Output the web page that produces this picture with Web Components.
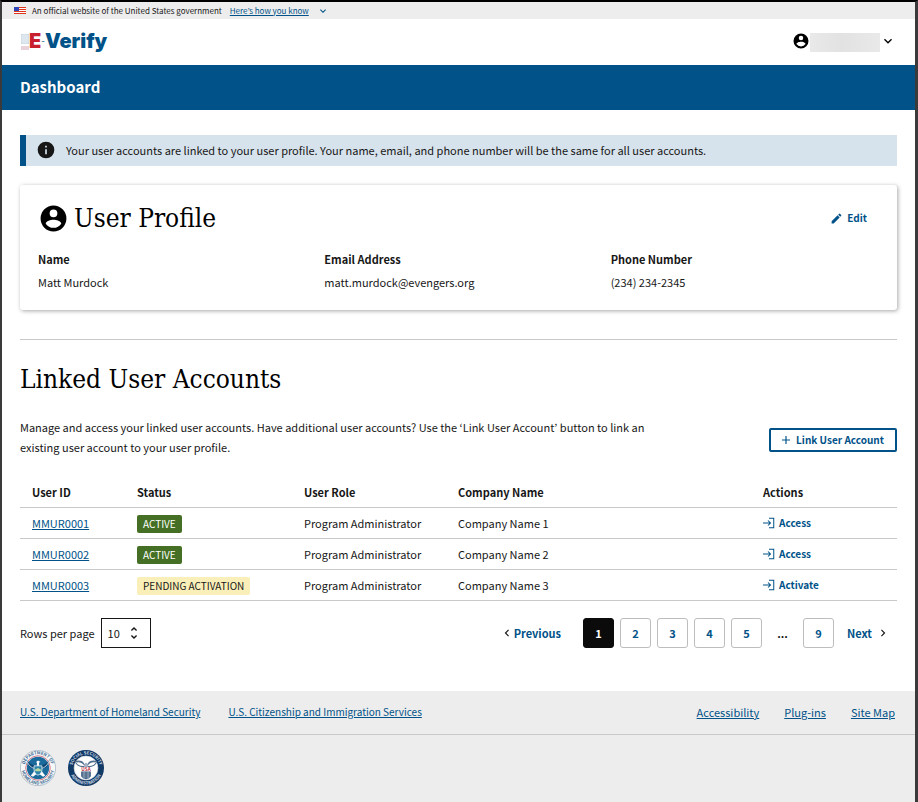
<!DOCTYPE html>
<html lang="en">
<head>
<meta charset="utf-8">
<meta name="viewport" content="width=device-width, initial-scale=1">
<title>E-Verify Dashboard</title>
<style>
  html, body { margin: 0; min-height: 100%; }
  body {
    --blue: #005288;
    --ink: #171717;
    --line: #c9c9c9;
    --grey: #ededed;
    --serif: "DejaVu Serif Condensed", "DejaVu Serif", serif;
    color: var(--ink);
    font: 11px/20px "Noto Sans CJK KR", "Noto Sans", sans-serif;
  }
</style>
</head>
<body>
<everify-app></everify-app>

<script>
const ICONS = {
  person: '<path d="M12 2a10 10 0 1 0 0 20 10 10 0 0 0 0-20zm0 3a3 3 0 1 1 0 6 3 3 0 0 1 0-6zm0 14.200a7.200 7.200 0 0 1-6-3.220c.03-1.990 4-3.080 6-3.080 1.990 0 5.970 1.090 6 3.080a7.200 7.200 0 0 1-6 3.220z"/>',
  info: '<path d="M12 2a10 10 0 1 0 0 20 10 10 0 0 0 0-20zm1 15h-2v-6h2zm0-8h-2V7h2z"/>',
  edit: '<path d="M3 17.250V21h3.750L17.810 9.940l-3.750-3.750zM20.710 7.040a1 1 0 0 0 0-1.410l-2.340-2.340a1 1 0 0 0-1.410 0l-1.830 1.830 3.750 3.750z"/>',
  down: '<path d="M7.410 8.590 12 13.170l4.590-4.580L18 10l-6 6-6-6z"/>',
  prev: '<path d="M15.410 7.410 14 6l-6 6 6 6 1.410-1.410L10.830 12z"/>',
  next: '<path d="M10 6 8.590 7.410 13.170 12l-4.580 4.590L10 18l6-6z"/>',
  unfold: '<path d="M12 5.830 15.170 9l1.410-1.410L12 3 7.410 7.590 8.830 9zm0 12.340L8.830 15l-1.410 1.410L12 21l4.590-4.590L15.170 15z"/>',
  plus: '<path d="M19 13h-6v6h-2v-6H5v-2h6V5h2v6h6z"/>',
  login: '<path d="M12 1.500h10.500v21H12v-2h8.500v-17H12zM0 11h12.600L9.300 7.700l1.400-1.400 5.700 5.700-5.700 5.700-1.400-1.400 3.300-3.300H0z"/>'
};

/**
 * Base class: puts the static template of the element in an open shadow root
 *
 * @extends HTMLElement
 */
class EvElement extends HTMLElement {
  constructor() {
    super();
    this.attachShadow({mode: 'open'}).innerHTML = `
      <style>
        *, :host { box-sizing: border-box; }
        a { color: var(--blue); text-underline-offset: 1px; }
        button { font: inherit; background: none; border: 0; padding: 0; margin: 0; cursor: pointer; }
      </style>
      ${this.template()}
    `;
  }

  template() {
    return '<slot></slot>';
  }
}

// <ev-icon name="edit" size="14">
class EvIcon extends EvElement {
  template() {
    const size = this.getAttribute('size') || 16;
    return `
      <style>
        :host { display: inline-flex; flex: none; }
        svg { display: block; fill: currentColor; }
      </style>
      <svg viewBox="0 0 24 24" width="${size}" height="${size}" aria-hidden="true">${ICONS[this.getAttribute('name')] || ''}</svg>
    `;
  }
}

class GovBanner extends EvElement {
  template() {
    return `
      <style>
        :host { display: flex; align-items: center; height: 17px; padding: 0 12px; background: var(--grey); font-size: 8px; line-height: 16px; }
        svg.flag { margin-right: 6px; }
        a { margin: 0 8px; }
        ev-icon { color: var(--blue); }
      </style>
      <svg class="flag" width="12" height="7" viewBox="0 0 12 7" role="img" aria-label="U.S. flag" shape-rendering="crispEdges">
        <rect width="12" height="7" fill="#fff"/>
        <rect width="12" height="1" fill="#e0341c"/>
        <rect y="2" width="12" height="1" fill="#e0341c"/>
        <rect y="4" width="12" height="1" fill="#e0341c"/>
        <rect y="6" width="12" height="1" fill="#e0341c"/>
        <rect width="5" height="4" fill="#2f47b8"/>
      </svg>
      <span>An official website of the United States government</span>
      <a href="#how">Here’s how you know</a>
      <ev-icon name="down" size="12"></ev-icon>
    `;
  }
}

class EvLogo extends EvElement {
  template() {
    return `
      <style>
        :host { display: inline-flex; align-items: center; }
        a { display: flex; align-items: center; text-decoration: none; font: 900 20px/24px Inter, sans-serif; }
        .e { color: #c8202f; }
        .dash { font-weight: 400; font-size: 8px; }
      </style>
      <a href="#home">
        <svg width="8" height="18" viewBox="0 0 8 18" aria-hidden="true">
          <path fill="#c5d5e2" d="M0 2h8v10H0z"/>
          <path stroke="#fff" stroke-width=".5" d="M0 4h8M0 6h8M0 8h8M0 10h8M2 2v10M4 2v10M6 2v10"/>
          <path fill="#ead3d8" d="M0 14h8v4H0z"/>
        </svg>
        <span class="e">E</span><span class="dash">-</span><span>Verify</span>
      </a>
    `;
  }
}

class SiteHeader extends EvElement {
  template() {
    return `
      <style>
        :host { display: flex; align-items: center; justify-content: space-between; height: 46px; padding: 0 19px 2px; background: #fff; }
        button { display: flex; align-items: center; color: #000; }
        .name { width: 70px; height: 19px; margin-top: 2px; background: linear-gradient(90deg, #e9e9e9, #e2e2e2 45%, #e9e9e9); }
      </style>
      <ev-logo></ev-logo>
      <button type="button" aria-label="Account menu">
        <ev-icon name="person" size="18"></ev-icon>
        <span class="name"></span>
        <ev-icon name="down" size="16"></ev-icon>
      </button>
    `;
  }
}

class PageTitle extends EvElement {
  template() {
    return `
      <style>
        :host { display: flex; align-items: center; height: 45px; padding: 0 18px 2px; background: var(--blue); color: #fff; }
        h1 { margin: 0; font-size: 15px; line-height: 24px; }
      </style>
      <h1><slot></slot></h1>
    `;
  }
}

class InfoAlert extends EvElement {
  template() {
    return `
      <style>
        :host { display: flex; align-items: center; gap: 10px; min-height: 31px; padding: 0 10px 1px; border-left: 6px solid var(--blue); background: #d7e3ec; }
      </style>
      <ev-icon name="info" size="20"></ev-icon>
      <span><slot></slot></span>
    `;
  }
}

class ProfileField extends EvElement {
  template() {
    return `
      <style>
        :host { display: block; }
        strong, span { display: block; line-height: 23px; }
      </style>
      <strong>${this.getAttribute('label')}</strong>
      <span><slot></slot></span>
    `;
  }
}

class ProfileCard extends EvElement {
  template() {
    return `
      <style>
        :host { display: block; padding: 15px 18px 16px; border-radius: 3px; background: #fff; box-shadow: 1px 1px 4px rgba(0, 0, 0, .35); }
        header { display: flex; align-items: center; justify-content: space-between; padding-right: 12px; }
        h2 { display: flex; align-items: center; gap: 5px; margin: 0; font: 400 26px/36px var(--serif); color: #000; }
        button { display: flex; align-items: center; gap: 4px; color: var(--blue); font-size: 10px; font-weight: 700; line-height: 20px; }
        .fields { display: grid; grid-template-columns: repeat(3, 1fr); gap: 18px; margin-top: 12px; }
      </style>
      <header>
        <h2><ev-icon name="person" size="31"></ev-icon><slot name="title"></slot></h2>
        <button type="button"><ev-icon name="edit" size="13"></ev-icon>Edit</button>
      </header>
      <div class="fields"><slot></slot></div>
    `;
  }
}

class StatusTag extends EvElement {
  template() {
    return `
      <style>
        :host { display: inline-block; padding: 0 6px; border-radius: 2px; background: #446f24; color: #fff; font-size: 10px; line-height: 18px; vertical-align: middle; }
        :host([kind="pending"]) { background: #faefb9; color: var(--ink); }
      </style>
      <slot></slot>
    `;
  }
}

class AccountsTable extends EvElement {
  template() {
    return `
      <style>
        :host { display: block; }
        table { width: 100%; border-collapse: collapse; table-layout: fixed; }
        th, td { height: 31px; padding: 0 12px; border-bottom: 1px solid var(--line); text-align: left; line-height: 20px; }
        th { height: 30px; }
        button { display: flex; align-items: center; gap: 4px; color: var(--blue); font-size: 10px; font-weight: 700; line-height: 20px; }
        .id { width: 105px; }
        .status { width: 167px; }
        .role { width: 154px; }
        .actions { width: 146px; }
      </style>
      <table>
        <thead>
          <tr><th class="id">User ID</th><th class="status">Status</th><th class="role">User Role</th><th>Company Name</th><th class="actions">Actions</th></tr>
        </thead>
        <tbody></tbody>
      </table>
    `;
  }

  connectedCallback() {
    this.draw([
      ['MMUR0001', 'ACTIVE', 'Company Name 1', 'Access'],
      ['MMUR0002', 'ACTIVE', 'Company Name 2', 'Access'],
      ['MMUR0003', 'PENDING ACTIVATION', 'Company Name 3', 'Activate']
    ]);
  }

  draw(rows) {
    this.shadowRoot.querySelector('tbody').innerHTML = rows.map(([id, status, company, action]) => `
      <tr>
        <td><a href="#${id}">${id}</a></td>
        <td><status-tag kind="${status == 'ACTIVE' ? 'active' : 'pending'}">${status}</status-tag></td>
        <td>Program Administrator</td>
        <td>${company}</td>
        <td><button type="button"><ev-icon name="login" size="12"></ev-icon>${action}</button></td>
      </tr>
    `).join('');
  }
}

class RowsPerPage extends EvElement {
  template() {
    return `
      <style>
        :host { display: flex; align-items: center; gap: 6px; }
        .box { position: relative; }
        select { appearance: none; display: block; width: 50px; height: 30px; padding: 0 6px; border: 1px solid var(--ink); border-radius: 0; background: #fff; color: var(--ink); font: inherit; }
        ev-icon { position: absolute; right: 9px; top: 7px; pointer-events: none; }
      </style>
      <label for="rows">Rows per page</label>
      <div class="box">
        <select id="rows"><option>10</option><option>25</option><option>50</option></select>
        <ev-icon name="unfold" size="16"></ev-icon>
      </div>
    `;
  }
}

class PageNav extends EvElement {
  template() {
    const pages = ['1', '2', '3', '4', '5', '...', '9'].map(p => p == '...'
      ? '<span class="gap">...</span>'
      : `<a class="page" href="#page${p}" ${p == '1' ? 'aria-current="page"' : ''}>${p}</a>`).join('');
    return `
      <style>
        :host { display: block; font-weight: 700; }
        nav { display: flex; align-items: center; gap: 6px; padding-right: 7px; }
        a { display: flex; align-items: center; text-decoration: none; }
        .page, .gap { width: 31px; height: 30px; display: flex; align-items: center; justify-content: center; }
        .page { border: 1px solid #bdbdbd; border-radius: 3px; }
        .page[aria-current] { background: #0b0b0b; border-color: #0b0b0b; color: #fff; }
        .gap { width: 29px; }
        .prev { margin-right: 16px; }
        .next { margin-left: 7px; gap: 4px; }
        ev-icon { color: var(--ink); }
      </style>
      <nav aria-label="Pagination">
        <a class="prev" href="#prev"><ev-icon name="prev" size="14"></ev-icon>Previous</a>
        ${pages}
        <a class="next" href="#next">Next<ev-icon name="next" size="14"></ev-icon></a>
      </nav>
    `;
  }
}

// round agency seals of the footer
class AgencySeal extends EvElement {
  template() {
    const dhs = this.getAttribute('agency') == 'dhs';
    const seal = dhs ? `
      <circle cx="50" cy="50" r="49" fill="#f7f8f9" stroke="#9fb0bd" stroke-width="2"/>
      <circle cx="50" cy="50" r="34" fill="#fff" stroke="#c2465a" stroke-width="2"/>
      <circle cx="50" cy="50" r="31" fill="#1a6a9c"/>
      <path fill="#fff" d="M50 64 36 74l-6-3 8-10 4-9h16l4 9 8 10-6 3z"/>
      <path fill="#0b4674" d="M18 26c2 17 10 25 23 27l4-10C32 42 24 36 18 26zM82 26c-2 17-10 25-23 27l-4-10c13-1 21-7 27-17z"/>
      <path fill="none" stroke="#fff" stroke-width="2" d="M18 26c4 16 13 24 26 26M82 26c-4 16-13 24-26 26"/>
      <path fill="#2c84ad" stroke="#fff" stroke-width="2" d="M39 44h22v11c0 8-6 13-11 15-5-2-11-7-11-15z"/>
      <path fill="#b9d7a0" d="M41 55l9-5 9 5-2 4H43z"/>
      <path fill="#fff" d="M44 34l6-5 7 4-4 2v9h-6v-9z"/>
    ` : `
      <circle cx="50" cy="50" r="50" fill="#123a66"/>
      <circle cx="50" cy="50" r="33" fill="#fff" stroke="#d5dde6" stroke-width="2"/>
      <path fill="none" stroke="#53708f" stroke-width="3" d="M46 43c-3-9-12-14-25-11 2 9 11 15 25 14M44 39c-5-5-11-7-19-6M54 43c3-9 12-14 25-11-2 9-11 15-25 14M56 39c5-5 11-7 19-6M50 36v11"/>
      <path fill="#123a66" d="M37 60h26v12c0 4-6 7-13 9-7-2-13-5-13-9z"/>
      <path stroke="#fff" stroke-width="2" d="M42 60v18M47 60v20M53 60v20M58 60v18"/>
      <text class="usa" x="50" y="58" text-anchor="middle">USA</text>
    `;
    return `
      <style>
        :host { display: block; }
        svg { display: block; }
        text { font-size: 12px; font-weight: 700; fill: ${dhs ? '#3d6d94' : '#c9d6e4'}; }
        .usa { font-size: 13px; fill: #c63647; }
      </style>
      <svg width="36" height="36" viewBox="0 0 100 100" role="img" aria-label="${this.getAttribute('label')}">
        ${seal}
        <defs>
          <path id="top" d="M12 50a38 38 0 0 1 76 0"/>
          <path id="bottom" d="M4 50a46 46 0 0 0 92 0"/>
        </defs>
        <text text-anchor="middle"><textPath href="#top" startOffset="50%">${dhs ? 'DEPARTMENT OF' : 'SOCIAL SECURITY'}</textPath></text>
        <text text-anchor="middle"><textPath href="#bottom" startOffset="50%">${dhs ? 'HOMELAND SECURITY' : 'ADMINISTRATION'}</textPath></text>
      </svg>
    `;
  }
}

class SiteFooter extends EvElement {
  template() {
    return `
      <style>
        :host { display: block; flex: 1; background: var(--grey); }
        nav { display: flex; justify-content: space-between; align-items: center; height: 44px; padding: 0 20px 0 18px; border-bottom: 1px solid var(--line); }
        .left, .right { display: flex; gap: 25px; }
        .left { gap: 28px; font-size: 10px; }
        .seals { display: flex; gap: 12px; padding: 15px 18px; }
      </style>
      <nav aria-label="Footer">
        <div class="left">
          <a href="#dhs">U.S. Department of Homeland Security</a>
          <a href="#uscis">U.S. Citizenship and Immigration Services</a>
        </div>
        <div class="right">
          <a href="#accessibility">Accessibility</a>
          <a href="#plugins">Plug-ins</a>
          <a href="#sitemap">Site Map</a>
        </div>
      </nav>
      <div class="seals">
        <agency-seal agency="dhs" label="Department of Homeland Security"></agency-seal>
        <agency-seal agency="ssa" label="Social Security Administration"></agency-seal>
      </div>
    `;
  }
}

class EverifyApp extends EvElement {
  template() {
    return `
      <style>
        :host { display: flex; flex-direction: column; min-height: 100vh; border: solid #3a3a3a; border-width: 2px 3px 0 2px; border-top-color: #000; background: #fff; }
        main { padding: 25px 18px 43px; }
        profile-card { margin-top: 19px; }
        hr { height: 1px; margin: 29px 0 23px; border: 0; background: var(--line); }
        h2 { margin: 0; font: 400 26px/32px var(--serif); color: #000; }
        .intro { display: flex; align-items: center; justify-content: space-between; margin: 22px 0 20px; }
        .intro p { margin: 0; max-width: 640px; }
        .intro button { display: flex; align-items: center; gap: 3px; margin-top: 6px; padding: 0 11px 0 8px; border: 2px solid var(--blue); border-radius: 2px; color: var(--blue); font-size: 10px; font-weight: 700; line-height: 20px; }
        .paging { display: flex; align-items: center; justify-content: space-between; margin-top: 17px; }
      </style>
      <gov-banner></gov-banner>
      <site-header></site-header>
      <page-title>Dashboard</page-title>
      <main>
        <info-alert>Your user accounts are linked to your user profile. Your name, email, and phone number will be the same for all user accounts.</info-alert>
        <profile-card>
          <span slot="title">User Profile</span>
          <profile-field label="Name">Matt Murdock</profile-field>
          <profile-field label="Email Address">matt.murdock@evengers.org</profile-field>
          <profile-field label="Phone Number">(234) 234-2345</profile-field>
        </profile-card>
        <hr>
        <h2>Linked User Accounts</h2>
        <div class="intro">
          <p>Manage and access your linked user accounts. Have additional user accounts? Use the ‘Link User Account’ button to link an existing user account to your user profile.</p>
          <button type="button"><ev-icon name="plus" size="14"></ev-icon>Link User Account</button>
        </div>
        <accounts-table></accounts-table>
        <div class="paging">
          <rows-per-page></rows-per-page>
          <page-nav></page-nav>
        </div>
      </main>
      <site-footer></site-footer>
    `;
  }
}

customElements.define('ev-icon', EvIcon);
customElements.define('gov-banner', GovBanner);
customElements.define('ev-logo', EvLogo);
customElements.define('site-header', SiteHeader);
customElements.define('page-title', PageTitle);
customElements.define('info-alert', InfoAlert);
customElements.define('profile-field', ProfileField);
customElements.define('profile-card', ProfileCard);
customElements.define('status-tag', StatusTag);
customElements.define('accounts-table', AccountsTable);
customElements.define('rows-per-page', RowsPerPage);
customElements.define('page-nav', PageNav);
customElements.define('agency-seal', AgencySeal);
customElements.define('site-footer', SiteFooter);
customElements.define('everify-app', EverifyApp);
</script>
</body>
</html>
